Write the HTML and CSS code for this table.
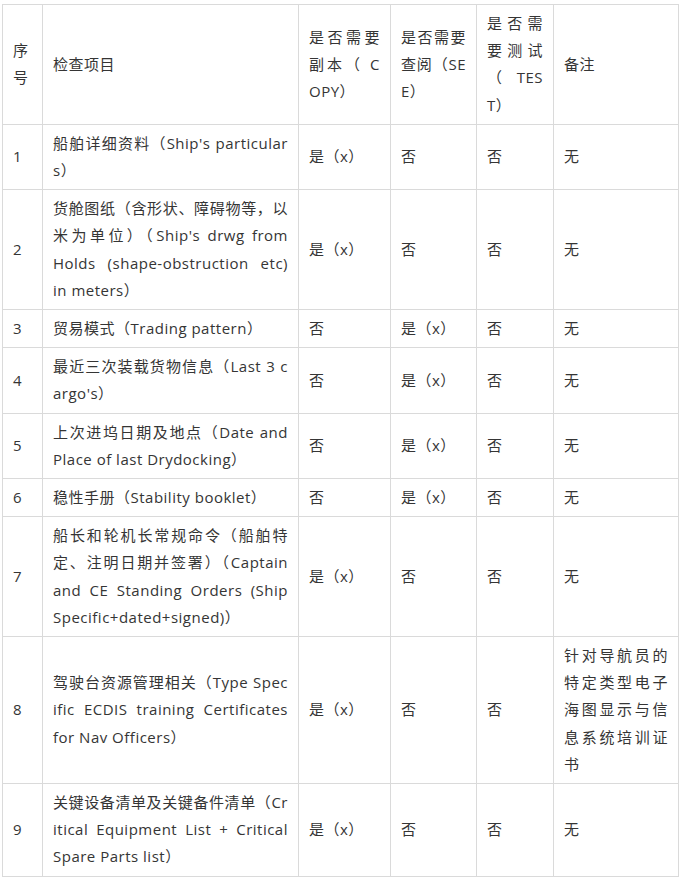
FILE: index.html
```html
<!DOCTYPE html>
<html lang="zh-CN">
<head>
<meta charset="utf-8">
<title>检查项目</title>
<link rel="stylesheet" href="styles.css">
</head>
<body>
<div class="page">
<table class="checklist">
  <colgroup>
    <col class="c-no">
    <col class="c-item">
    <col class="c-copy">
    <col class="c-see">
    <col class="c-test">
    <col class="c-note">
  </colgroup>
  <tbody>
    <tr>
      <td><span class="ln">序</span>号</td>
      <td>检查项目</td>
      <td><span class="ln">是否需要<br>副本（ C</span>OPY）</td>
      <td><span class="ln">是否需要<br>查阅（SE</span>E）</td>
      <td><span class="ln">是否需<br>要测试<br>（ TES</span>T）</td>
      <td>备注</td>
    </tr>
    <tr>
      <td>1</td>
      <td><span class="ln">船舶详细资料（Ship's particular</span>s）</td>
      <td>是（x）</td>
      <td>否</td>
      <td>否</td>
      <td>无</td>
    </tr>
    <tr>
      <td>2</td>
      <td><span class="ln">货舱图纸（含形状、障碍物等，以<br>米为单位）（Ship's drwg from<br>Holds (shape-obstruction etc)</span>in meters）</td>
      <td>是（x）</td>
      <td>否</td>
      <td>否</td>
      <td>无</td>
    </tr>
    <tr>
      <td>3</td>
      <td>贸易模式（Trading pattern）</td>
      <td>否</td>
      <td>是（x）</td>
      <td>否</td>
      <td>无</td>
    </tr>
    <tr>
      <td>4</td>
      <td><span class="ln">最近三次装载货物信息（Last 3 c</span>argo's）</td>
      <td>否</td>
      <td>是（x）</td>
      <td>否</td>
      <td>无</td>
    </tr>
    <tr>
      <td>5</td>
      <td><span class="ln">上次进坞日期及地点（Date and</span>Place of last Drydocking）</td>
      <td>否</td>
      <td>是（x）</td>
      <td>否</td>
      <td>无</td>
    </tr>
    <tr>
      <td>6</td>
      <td>稳性手册（Stability booklet）</td>
      <td>否</td>
      <td>是（x）</td>
      <td>否</td>
      <td>无</td>
    </tr>
    <tr>
      <td>7</td>
      <td><span class="ln">船长和轮机长常规命令（船舶特<br>定、注明日期并签署）（Captain<br>and CE Standing Orders (Ship</span>Specific+dated+signed)）</td>
      <td>是（x）</td>
      <td>否</td>
      <td>否</td>
      <td>无</td>
    </tr>
    <tr>
      <td>8</td>
      <td><span class="ln">驾驶台资源管理相关（Type Spec<br>ific ECDIS training Certificates</span>for Nav Officers）</td>
      <td>是（x）</td>
      <td>否</td>
      <td>否</td>
      <td><span class="ln">针对导航员的<br>特定类型电子<br>海图显示与信<br>息系统培训证</span>书</td>
    </tr>
    <tr>
      <td>9</td>
      <td><span class="ln">关键设备清单及关键备件清单（Cr<br>itical Equipment List + Critical</span>Spare Parts list）</td>
      <td>是（x）</td>
      <td>否</td>
      <td>否</td>
      <td>无</td>
    </tr>
  </tbody>
</table>
</div>
</body>
</html>
```
FILE: styles.css
```css
html, body {
  margin: 0;
  padding: 0;
  background: #ffffff;
}

.page {
  padding: 4px 4px 0 2px;
}

.checklist {
  width: 676px;
  table-layout: fixed;
  border-collapse: collapse;
  font-family: "Open Sans", "Noto Sans CJK SC", sans-serif;
  font-size: 15px;
  line-height: 27.2px;
  letter-spacing: 0.5px;
  color: #353535;
}

.c-no { width: 40px; }
.c-item { width: 256px; }
.c-copy { width: 92px; }
.c-see { width: 86px; }
.c-test { width: 77px; }
.c-note { width: 125px; }

.checklist td {
  border: 1px solid #dadada;
  padding: 5px 10px;
  vertical-align: middle;
  text-align: left;
  word-break: break-all;
}

/* lines that the original layout fills edge to edge */
.ln {
  display: block;
  white-space: nowrap;
  text-align: justify;
  text-align-last: justify;
}
```
